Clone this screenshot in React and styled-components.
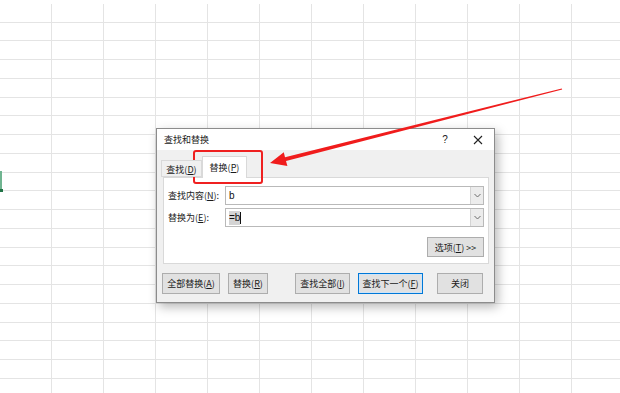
import React from 'react'
import styled, { createGlobalStyle } from 'styled-components';

const GlobalStyle = createGlobalStyle`
    html, body {
        margin: 0;
        padding: 0;
        background: #fff;
    }
    body {
        font-family: "Noto Sans CJK SC", "Noto Sans", sans-serif;
    }
`;

function Chevron() {
    return (
        <svg width="7" height="5" viewBox="0 0 7 5">
            <path d="M0.5 1 L3.5 4 L6.5 1" fill="none" stroke="#6d6d6d" strokeWidth="1" />
        </svg>
    )
}

function Field({ label, keyChar, children, selected }) {
    return (
        <FieldRow>
            <Label>{label}(<u>{keyChar}</u>):</Label>
            <ComboBox>
                <div className="value">
                    {selected ? (
                        <>
                            <span className="sel">{children}</span>
                            <span className="caret" />
                        </>
                    ) : children}
                </div>
                <div className="drop"><Chevron /></div>
            </ComboBox>
        </FieldRow>
    )
}

function App() {
    return (
        <Sheet>
            <GlobalStyle />
            <CellCursor />
            <Dialog>
                <TitleBar>
                    <span className="title">查找和替换</span>
                    <span className="ctrl help">?</span>
                    <span className="ctrl close">
                        <svg width="10" height="10" viewBox="0 0 10 10">
                            <path d="M1 1 L9 9 M9 1 L1 9" stroke="#222" strokeWidth="1.1" />
                        </svg>
                    </span>
                </TitleBar>
                <TabRow>
                    <Tab>查找(<u>D</u>)</Tab>
                    <Tab active>替换(<u>P</u>)</Tab>
                </TabRow>
                <Panel>
                    <Field label="查找内容" keyChar="N">b</Field>
                    <Field label="替换为" keyChar="E" selected>=b</Field>
                    <OptionsRow>
                        <Button wide={57} tall={20}>选项(<u>T</u>) &gt;&gt;</Button>
                    </OptionsRow>
                </Panel>
                <ButtonRow>
                    <Button wide={58}>全部替换(<u>A</u>)</Button>
                    <Button wide={40} gap={8}>替换(<u>R</u>)</Button>
                    <Button wide={55} gap={27}>查找全部(<u>I</u>)</Button>
                    <Button wide={65} gap={8} focused>查找下一个(<u>F</u>)</Button>
                    <Button wide={46} gap={14}>关闭</Button>
                </ButtonRow>
            </Dialog>
            <Arrow width="620" height="393" viewBox="0 0 620 393">
                <polygon
                    points="270,163 283.8,152.3 285,157.3 561.8,88.4 562.2,89.6 286,161 287.4,166"
                    fill="#f01c1c"
                />
            </Arrow>
            <RedBox />
        </Sheet>
    )
}

const Sheet = styled.div`
    position: relative;
    width: 620px;
    height: 393px;
    overflow: hidden;
    background-color: #fff;
    background-image:
        repeating-linear-gradient(to right, transparent 0 51px, #e4e4e4 51px 52px),
        repeating-linear-gradient(to bottom, transparent 0 17.75px, #e4e4e4 17.75px 18.75px);
    background-size: 100% 389px, 100% 389px;
    background-position: 0 4px, 0 4px;
    background-repeat: no-repeat;
`;

const CellCursor = styled.div`
    position: absolute;
    left: 0;
    top: 171px;
    width: 1.5px;
    height: 21px;
    background: #6fb490;
    &::after{
        content: '';
        position: absolute;
        left: 0;
        bottom: 0;
        width: 3px;
        height: 3px;
        background: #217346;
    }
`;

const Dialog = styled.div`
    position: absolute;
    left: 156px;
    top: 128px;
    width: 337px;
    height: 173px;
    border: 1px solid #8c8c8c;
    background: #f0f0f0;
    box-shadow: 3px 4px 10px rgba(0,0,0,.28);
    display: flex;
    flex-direction: column;
    font-size: 9px;
    color: #1a1a1a;
`;

const TitleBar = styled.div`
    height: 21px;
    background: #fff;
    display: flex;
    align-items: center;
    padding-left: 7px;
    .title{
        flex: 1;
        font-size: 9px;
    }
    .ctrl{
        display: flex;
        align-items: center;
        justify-content: center;
        width: 22px;
        height: 21px;
    }
    .help{
        font-family: "Liberation Sans", sans-serif;
        font-size: 10px;
        margin-right: 11px;
    }
    .close{
        margin-right: 5px;
    }
`;

const TabRow = styled.div`
    height: 27px;
    display: flex;
    align-items: flex-end;
    padding-left: 4px;
    position: relative;
    z-index: 1;
`;

const Tab = styled.div`
    display: flex;
    align-items: center;
    justify-content: center;
    box-sizing: border-box;
    width: ${p => p.active ? 45 : 41}px;
    height: ${p => p.active ? 22 : 17}px;
    margin-bottom: ${p => p.active ? -1 : 0}px;
    background: ${p => p.active ? '#fff' : '#f0f0f0'};
    border: 1px solid #d9d9d9;
    border-bottom: ${p => p.active ? 'none' : '1px solid #d9d9d9'};
    font-size: 9px;
    padding-top: ${p => p.active ? 0 : 1}px;
`;

const Panel = styled.div`
    margin: 0 5px 0 6px;
    height: 87px;
    background: #fff;
    border: 1px solid #d9d9d9;
    box-sizing: border-box;
    padding: 8px 4px 0 4px;
    display: flex;
    flex-direction: column;
`;

const FieldRow = styled.div`
    display: flex;
    align-items: center;
    height: 19px;
    margin-bottom: 3px;
`;

const Label = styled.div`
    width: 57px;
    font-size: 9px;
    white-space: nowrap;
`;

const ComboBox = styled.div`
    flex: 1;
    height: 19px;
    box-sizing: border-box;
    border: 1px solid #b9b9b9;
    display: flex;
    background: #fff;
    .value{
        flex: 1;
        display: flex;
        align-items: center;
        padding-left: 3px;
        font-family: "Liberation Sans", sans-serif;
        font-size: 10px;
        color: #111;
    }
    .sel{
        background: #d4d4d4;
        padding: 1px 0;
        line-height: 12px;
    }
    .caret{
        width: 1px;
        height: 12px;
        background: #111;
    }
    .drop{
        width: 12px;
        border-left: 1px solid #d4d4d4;
        background: #ececec;
        display: flex;
        align-items: center;
        justify-content: center;
    }
`;

const OptionsRow = styled.div`
    display: flex;
    justify-content: flex-end;
    margin-top: 7px;
`;

const Button = styled.div`
    width: ${p => p.wide}px;
    height: ${p => p.tall || 21}px;
    margin-left: ${p => p.gap || 0}px;
    box-sizing: border-box;
    background: #e1e1e1;
    border: 1px solid ${p => p.focused ? '#0078d7' : '#adadad'};
    box-shadow: ${p => p.focused ? 'inset 0 0 0 1px #cfe4f7' : 'none'};
    display: flex;
    align-items: center;
    justify-content: center;
    font-size: 9px;
    white-space: nowrap;
    color: #1a1a1a;
`;

const ButtonRow = styled.div`
    display: flex;
    padding: 9px 0 0 5px;
`;

const Arrow = styled.svg`
    position: absolute;
    left: 0;
    top: 0;
    pointer-events: none;
`;

const RedBox = styled.div`
    position: absolute;
    left: 193px;
    top: 150px;
    width: 70px;
    height: 34px;
    box-sizing: border-box;
    border: 2px solid #ef2020;
    border-radius: 3px;
`;

export default App;
